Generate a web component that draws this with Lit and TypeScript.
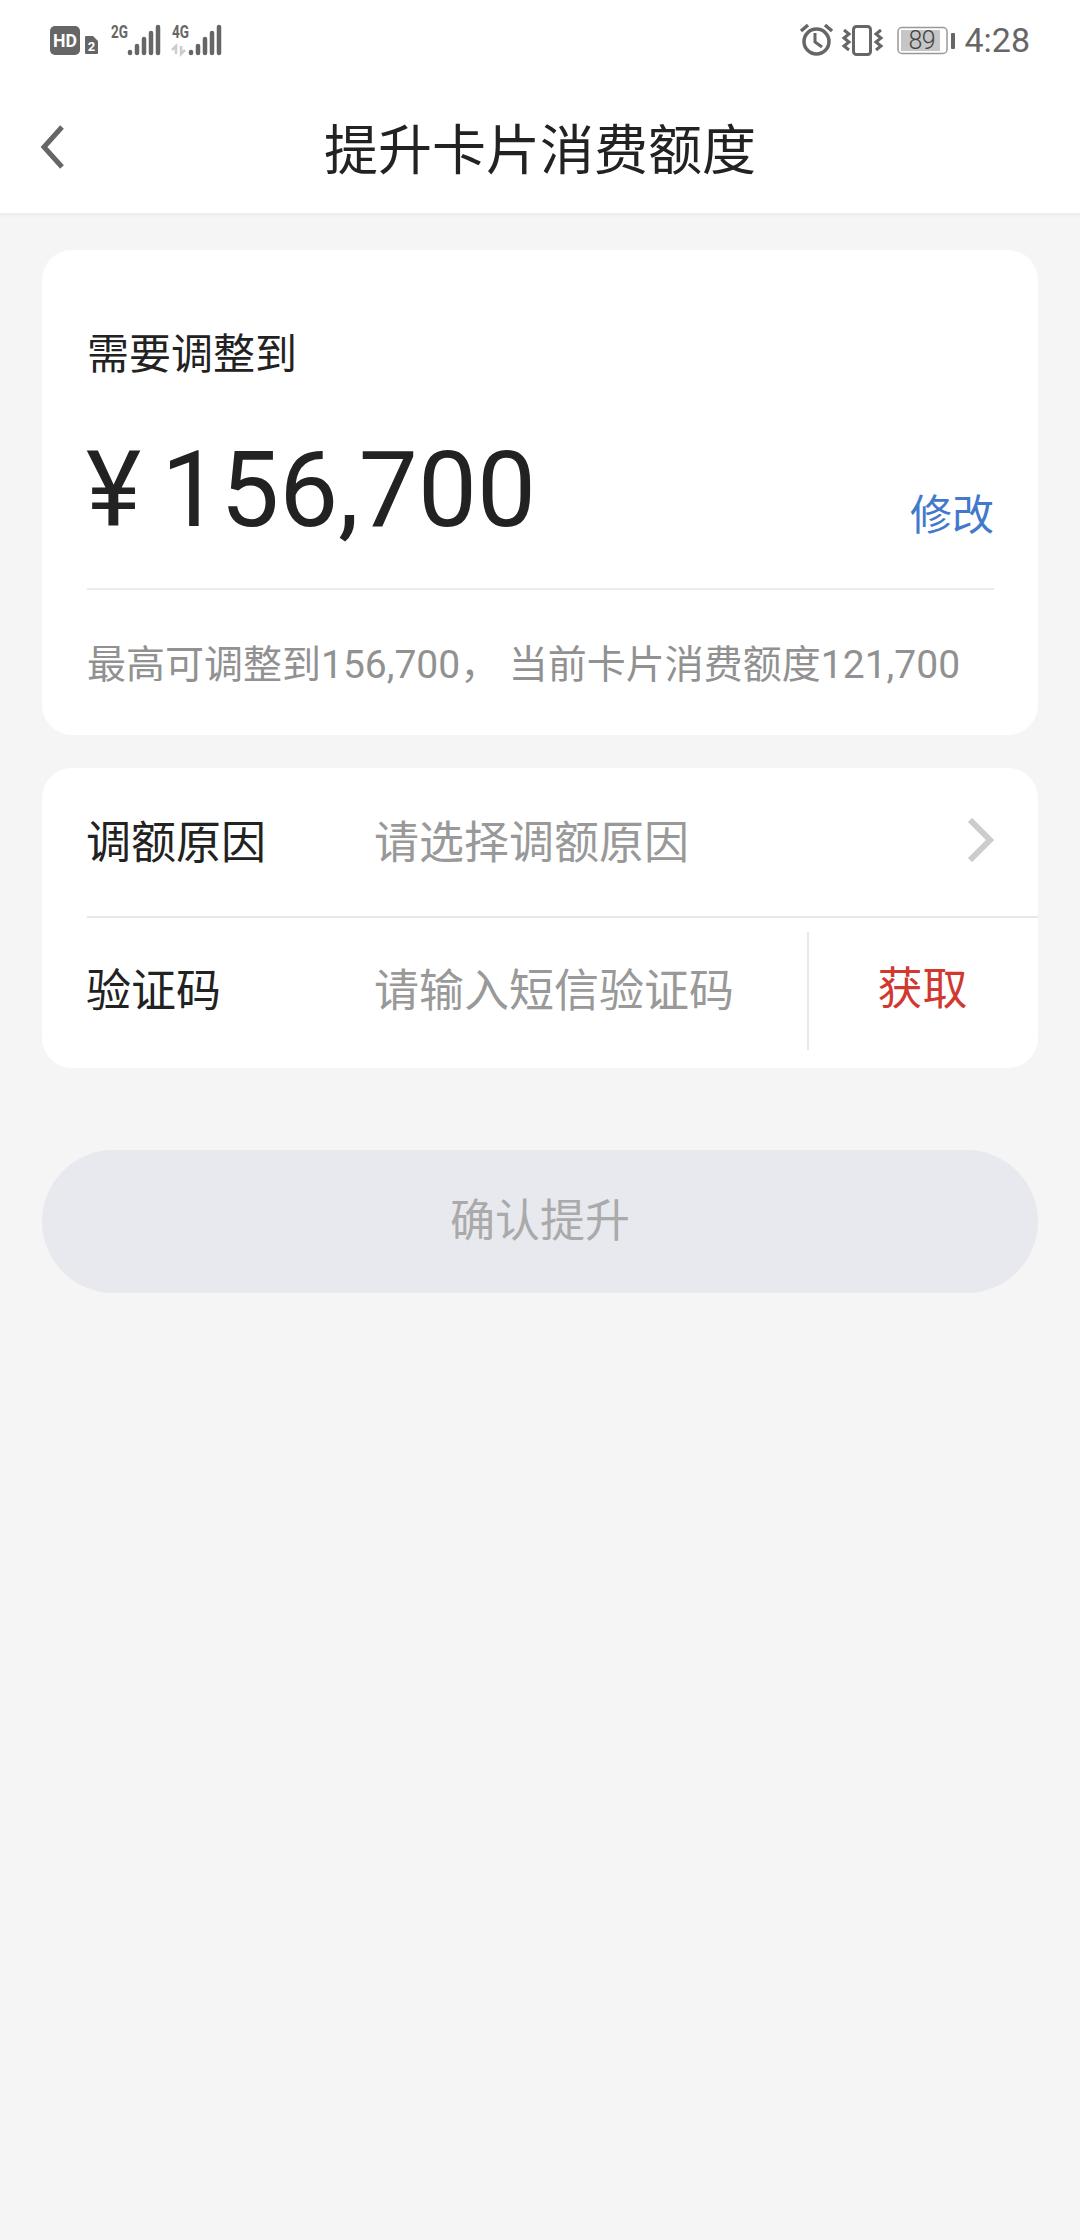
import { LitElement, html, css } from "lit";
import { customElement } from "lit/decorators.js";

@customElement("app-root")
export class AppRoot extends LitElement {
  static styles = css`
    :host {
      display: block;
      width: 1080px;
      height: 2240px;
      background: #f5f5f5;
      font-family: "Roboto", "Noto Sans CJK SC", sans-serif;
      color: #222;
      overflow: hidden;
    }
    .top {
      background: #fff;
      height: 213px;
      box-shadow: 0 2px 4px rgba(0, 0, 0, 0.05);
      display: flex;
      flex-direction: column;
    }
    .status {
      height: 80px;
      display: flex;
      align-items: center;
      justify-content: space-between;
      padding: 0 50px;
      color: #666;
    }
    .status svg { display: block; }
    .status-right { display: flex; align-items: center; }
    .time { font-size: 34px; color: #666; margin-left: 7px; line-height: 1; }
    .nav {
      flex: 1;
      position: relative;
      display: flex;
      align-items: center;
      justify-content: center;
      padding-top: 10px;
      font-size: 54px;
      line-height: 1;
    }
    .back { position: absolute; left: 40px; top: 45px; }
    .content { padding: 37px 42px 0; display: flex; flex-direction: column; }
    .card { background: #fff; border-radius: 30px; }
    .limit { height: 485px; box-sizing: border-box; padding: 0 44px 0 45px; margin-bottom: 33px; display: flex; flex-direction: column; }
    .need { font-size: 42px; line-height: 60px; margin-top: 75px; }
    .amount-row {
      display: flex;
      justify-content: space-between;
      align-items: flex-end;
      height: 193px;
      margin-top: 10px;
      border-bottom: 2px solid #ebebeb;
    }
    .amount { font-size: 105px; line-height: 1; margin-bottom: 45px; white-space: pre; }
    .yen { margin-left: -1px; margin-right: 20px; }
    .edit { font-size: 42px; line-height: 60px; color: #4279cc; margin-bottom: 42px; }
    .hint { font-size: 39px; color: #919191; margin-top: 47px; line-height: 56px; white-space: pre; }
    .form { height: 300px; margin-bottom: 82px; display: flex; flex-direction: column; }
    .row { display: flex; align-items: center; margin-left: 45px; font-size: 45px; }
    .row1 { border-bottom: 2px solid #e8e8e8; padding-bottom: 5px; box-sizing: border-box; height: 150px; }
    .row2 { flex: 1; padding-bottom: 11px; }
    .label { width: 288px; flex: none; margin-left: -1px; }
    .ph { color: #999; flex: 1; }
    .chev { margin-right: 44px; }
    .get {
      width: 231px;
      height: 118px;
      border-left: 2px solid #e8e8e8;
      display: flex;
      align-items: center;
      justify-content: center;
      color: #d13830;
      box-sizing: border-box;
      margin-top: 6px;
      padding: 0 2px 10px 0;
    }
    .btn {
      height: 143px;
      border-radius: 72px;
      background: #e8e9ef;
      color: #aaa;
      font-size: 45px;
      display: flex;
      align-items: center;
      justify-content: center;
      padding-bottom: 8px;
      box-sizing: border-box;
    }
  `;

  render() {
    return html`
      <div class="top">
        <div class="status">
          <svg width="175" height="80" viewBox="50 0 175 80">
            <rect x="50" y="26" width="30" height="29" rx="5" fill="#666"/>
            <text x="65" y="47" text-anchor="middle" font-size="19" font-weight="700" font-family="Roboto" fill="#fff" textLength="24" lengthAdjust="spacingAndGlyphs">HD</text>
            <path d="M86 36h7l5 5v12a1 1 0 0 1-1 1H86a1 1 0 0 1-1-1V37a1 1 0 0 1 1-1z" fill="#666"/>
            <text x="91.5" y="51" text-anchor="middle" font-size="13" font-weight="700" font-family="Roboto" fill="#fff">2</text>
            <text x="111" y="38" font-size="18" font-weight="700" font-family="Roboto" fill="#666" textLength="17" lengthAdjust="spacingAndGlyphs">2G</text>
            <text x="172" y="38" font-size="18" font-weight="700" font-family="Roboto" fill="#666" textLength="17" lengthAdjust="spacingAndGlyphs">4G</text>
            <g stroke="#666" stroke-width="4.5" stroke-linecap="round" fill="none">
              <path d="M130 52v1M137 46v7M144 39v14M151 33v20M158 27v26"/>
              <path d="M191 52v1M198 46v7M205 39v14M212 33v20M219 27v26"/>
            </g>
            <path d="M172 50l4-4v8M185 50l-4 4v-8" stroke="#ccc" stroke-width="2.5" fill="none"/>
          </svg>
          <div class="status-right">
            <svg width="158" height="80" viewBox="800 0 158 80" fill="none">
              <g stroke="#666" stroke-width="3.5">
                <circle cx="817.5" cy="41.5" r="12.5"/>
                <path d="M816 33v9l7 5" stroke-width="3"/>
                <path d="M802 31l7-6M833 31l-7-6"/>
              </g>
              <g stroke="#666" stroke-width="3">
                <rect x="854.5" y="26.5" width="17" height="28" rx="3"/>
                <path d="M845 30l5 4-5 4 5 4-5 4 5 4M882 30l-5 4 5 4-5 4 5 4-5 4"/>
              </g>
              <rect x="899" y="27.5" width="49" height="26" rx="4" stroke="#999" stroke-width="1.5"/>
              <rect x="902" y="30" width="39" height="21" fill="#c6c6c6"/>
              <text x="923" y="49" text-anchor="middle" font-size="25" font-weight="300" font-family="Roboto" fill="#444" textLength="27">89</text>
              <rect x="952" y="33" width="4" height="16" rx="1" fill="#666"/>
            </svg>
            <span class="time">4:28</span>
          </div>
        </div>
        <div class="nav">
          <svg class="back" width="26" height="44" viewBox="0 0 26 44" fill="none" stroke="#666" stroke-width="5">
            <path d="M22 2L4 22l18 20"/>
          </svg>
          提升卡片消费额度
        </div>
      </div>
      <div class="content">
        <div class="card limit">
          <div class="need">需要调整到</div>
          <div class="amount-row">
            <div class="amount"><span class="yen">¥</span>156,700</div>
            <div class="edit">修改</div>
          </div>
          <div class="hint">最高可调整到156,700， 当前卡片消费额度121,700</div>
        </div>
        <div class="card form">
          <div class="row row1">
            <div class="label">调额原因</div>
            <div class="ph">请选择调额原因</div>
            <svg class="chev" width="28" height="44" viewBox="0 0 28 44" fill="none" stroke="#ccc" stroke-width="6">
              <path d="M4 2l20 20L4 42"/>
            </svg>
          </div>
          <div class="row row2">
            <div class="label">验证码</div>
            <div class="ph">请输入短信验证码</div>
            <div class="get">获取</div>
          </div>
        </div>
        <div class="btn">确认提升</div>
      </div>
    `;
  }
}
